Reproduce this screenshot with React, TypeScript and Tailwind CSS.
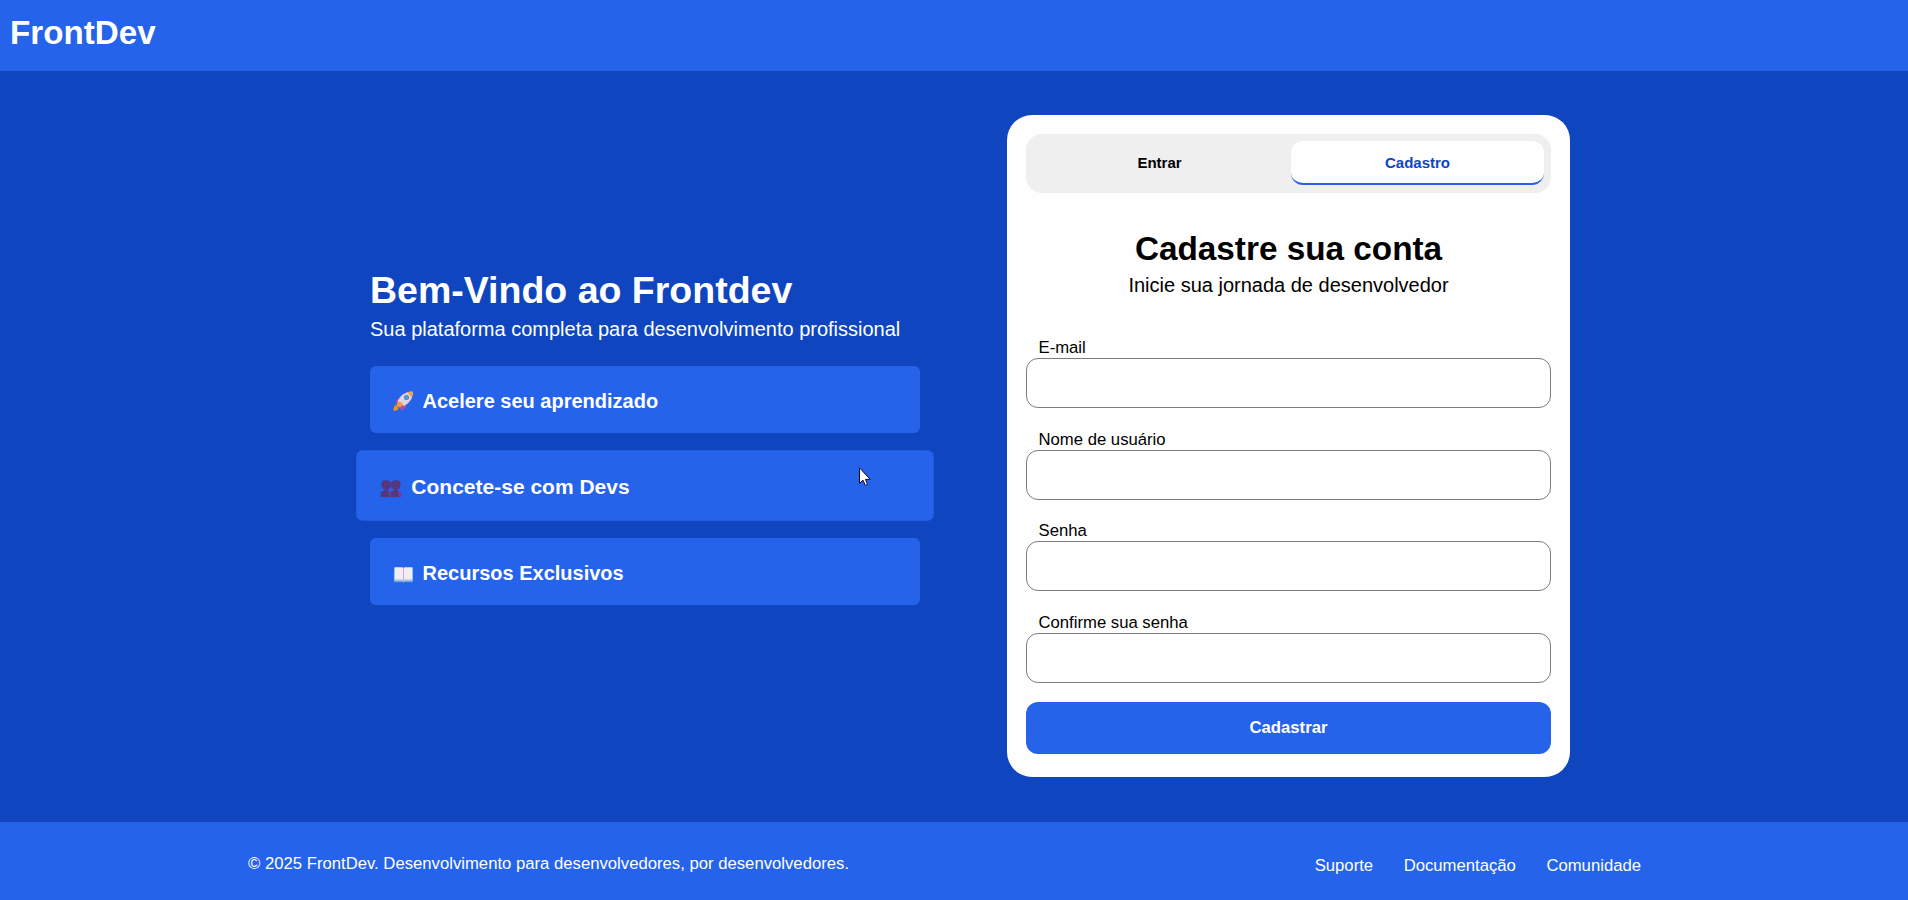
import React from 'react';

function RocketIcon() {
  return (
    <svg viewBox="-0.5 0 20 20" className="size-5 shrink-0" aria-hidden="true">
      <path d="M5.2 12.6 1.8 14.2c-1 .6-1.4 1.8-1.6 2.8l-.2 2.6c2.4.3 4.4-.2 5-2z" fill="#d98a2b" />
      <path d="M.2 19.8c0-2 .4-3.6 1.8-4.2 1.4-.4 2.6.8 2.2 2.2-.4 1.4-2 2-4 2z" fill="#e8940c" />
      <path d="M7.6 6.6C4.6 6.8 2.6 9 1.4 11.8l4.4.2zM13.2 12.2c0 3-2 5.4-4.400 7.200l-.8-4.600z" fill="#a84fae" />
      <path d="M18.6.8C12 .6 7 3.8 4 10.800l4.600 5C15.800 12.600 19.400 7.800 19.200 1.200z" fill="#e0d3df" />
      <path d="M19.200.6c-2-.2-4 0-5.800.7l5 5.200c.8-1.800 1-3.600.8-5.900z" fill="#f0a25a" />
      <path d="M4.400 10.800c1.200-.4 3.200.2 4.400 1.600 1 1.200 1 2.400.2 3.400L6.200 16.600 3.200 13.500z" fill="#ef9d42" />
      <path d="m9.600 13.600-3.200 3.200 1.500 3.100c1.400-1.600 2.100-3.600 1.700-6.300z" fill="#b34a9e" />
      <circle cx="13" cy="6.500" r="2.500" fill="#5b7fa8" />
      <circle cx="13.100" cy="6.600" r="1.600" fill="#38a9ee" />
    </svg>
  );
}

function PeopleIcon() {
  return (
    <svg viewBox="0 0 20 20" className="size-5 shrink-0" aria-hidden="true">
      <path d="M0 19.800v-3c0-1.600 1.100-2.800 2.700-3.200l1.300-.4v-1C2.200 11.600 1.400 10.200 1 8.600.6 5.200 1.800 3.500 5.200 3.500s5.100 1.800 4.800 5.200c-.2 1.800-1.400 3-2.800 3.700v1l1.300.3c1 .3 1.500 1.200 1.500 2.600v3.500z" fill="#54377f" />
      <path d="M10 19.800v-3.500c0-1.400.5-2.300 1.500-2.600l1.400-.3v-1c-1.400-.7-2.700-1.900-2.900-3.700-.3-3.400 1.400-5.200 4.800-5.200s4.700 1.800 4.400 5.300c-.2 1.700-1.200 2.900-3 3.600v1l1.100.2c1.600.4 2.700 1.600 2.700 3.200v3z" fill="#54377f" />
      <path d="m7.200 13.400 1.300.3c1 .3 1.500 1.200 1.500 2.600v3.500H8.200zM16.200 13.400l1.100.2c1.600.4 2.700 1.600 2.700 3.200v3h-2.400z" fill="#713aa5" />
    </svg>
  );
}

function BookIcon() {
  return (
    <svg viewBox="0 0 20 20" className="size-5 shrink-0" aria-hidden="true">
      <path d="M.8 6h19.400v13.200H11.800l-1.300.8-1.300-.8H.8z" fill="#3c9fe0" />
      <path d="M1.500 16.200h18v2h-7.800l-1.200.6-1.200-.6H1.500z" fill="#bdbdda" />
      <path d="M1.500 4.200h7c1.200 0 2 .5 2 1.300v12c-.4-.7-1.200-1-2.200-1H1.500zM19.500 4.200h-7c-1.200 0-2 .5-2 1.300v12c.4-.7 1.200-1 2.200-1h6.800z" fill="#f1edf5" />
      <path d="M10.500 5v13.200" stroke="#cfa6cf" strokeWidth="1" fill="none" />
    </svg>
  );
}

function Feature({ icon, label, active = false }: { icon: React.ReactNode; label: string; active?: boolean }) {
  return (
    <li
      className={
        active
          ? 'flex h-[67px] scale-105 items-center gap-[9.5px] rounded-md bg-[#2563eb] pt-[3px] pl-[23px] text-[20px] font-bold'
          : 'flex h-[67px] items-center gap-[9.5px] rounded-md bg-[#2563eb] pt-[3px] pl-[23px] text-[20px] font-bold'
      }
    >
      {icon}
      <span>{label}</span>
    </li>
  );
}

function Field({ id, label, type }: { id: string; label: string; type: string }) {
  return (
    <div className="flex flex-col">
      <label htmlFor={id} className="pl-[12.5px] text-[16.7px] leading-[21px]">
        {label}
      </label>
      <input id={id} type={type} className="h-[50px] w-full rounded-xl border border-[#7c7c7c] px-3" />
    </div>
  );
}

export default function App() {
  return (
    <div className="relative flex h-[900px] w-full flex-col overflow-hidden bg-[#0f46c0] font-['Liberation_Sans',Arial,sans-serif] text-white">
      <header className="h-[71px] shrink-0 bg-[#2563eb] pt-[14px] pl-[10px]">
        <h1 className="text-[33.2px] leading-[38px] font-bold">FrontDev</h1>
      </header>

      <main className="flex h-[751px] shrink-0 items-start gap-[87px] pl-[370px]">
        <section className="w-[550px] pt-[198px]">
          <h2 className="text-[37.5px] leading-[42px] font-bold whitespace-nowrap">Bem-Vindo ao Frontdev</h2>
          <p className="mt-[6px] text-[20px] leading-6 whitespace-nowrap">
            Sua plataforma completa para desenvolvimento profissional
          </p>
          <ul className="mt-[25px] flex flex-col gap-[19px]">
            <Feature icon={<RocketIcon />} label="Acelere seu aprendizado" />
            <Feature icon={<PeopleIcon />} label="Concete-se com Devs" active />
            <Feature icon={<BookIcon />} label="Recursos Exclusivos" />
          </ul>
        </section>

        <section className="mt-[44px] h-[662px] w-[563px] rounded-[25px] bg-[#fefefe] p-[19px] text-black">
          <div className="grid h-[59px] grid-cols-2 gap-[5px] rounded-2xl bg-[#efefef] px-[7px] pt-[7px] pb-2 text-[15px] font-bold">
            <button className="border-b-2 border-transparent pt-[3px]">Entrar</button>
            <button className="rounded-xl border-b-2 border-[#2563eb] bg-[#fefefe] pt-[3px] text-[#0f46c0]">Cadastro</button>
          </div>

          <div className="mt-[37px] text-center">
            <h2 className="text-[33.3px] leading-[38px] font-bold">Cadastre sua conta</h2>
            <p className="mt-[5px] text-[20px] leading-6">Inicie sua jornada de desenvolvedor</p>
          </div>

          <form className="mt-10">
            <div className="flex flex-col gap-[20.67px]">
              <Field id="email" label="E-mail" type="email" />
              <Field id="username" label="Nome de usuário" type="text" />
              <Field id="password" label="Senha" type="password" />
              <Field id="confirm" label="Confirme sua senha" type="password" />
            </div>
            <button type="button" className="mt-[19px] h-[52px] w-full rounded-xl bg-[#2563eb] text-[16.7px] font-bold text-white">
              Cadastrar
            </button>
          </form>
        </section>
      </main>

      <footer className="flex h-[78px] shrink-0 items-start justify-between bg-[#2563eb] pt-[32px] pr-[267px] pl-[248px] text-[16.7px] leading-5">
        <p>© 2025 FrontDev. Desenvolvimento para desenvolvedores, por desenvolvedores.</p>
        <nav className="mt-[2px] flex gap-[30.5px]">
          <a>Suporte</a>
          <a>Documentação</a>
          <a>Comunidade</a>
        </nav>
      </footer>

      <svg viewBox="0 0 12 19" className="absolute top-[467px] left-[859px] h-[19px] w-3" aria-hidden="true">
        <path d="M.5.8v15.700l3.500-3.300 2.300 5.200 2.300-1-2.200-5h4.800z" fill="#fff" stroke="#0a0a2a" strokeWidth="1" />
      </svg>
    </div>
  );
}
